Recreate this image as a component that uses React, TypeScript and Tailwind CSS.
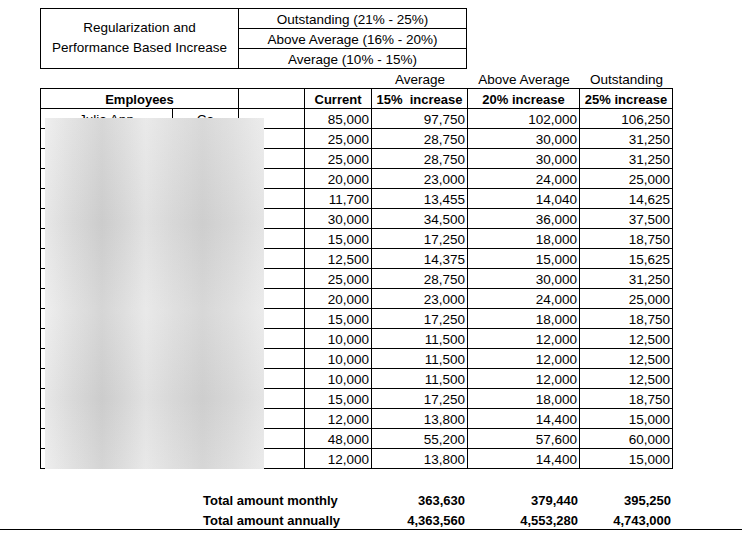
import React from 'react'

const ROWS: [string, string, string, string][] = [
  ['85,000', '97,750', '102,000', '106,250'],
  ['25,000', '28,750', '30,000', '31,250'],
  ['25,000', '28,750', '30,000', '31,250'],
  ['20,000', '23,000', '24,000', '25,000'],
  ['11,700', '13,455', '14,040', '14,625'],
  ['30,000', '34,500', '36,000', '37,500'],
  ['15,000', '17,250', '18,000', '18,750'],
  ['12,500', '14,375', '15,000', '15,625'],
  ['25,000', '28,750', '30,000', '31,250'],
  ['20,000', '23,000', '24,000', '25,000'],
  ['15,000', '17,250', '18,000', '18,750'],
  ['10,000', '11,500', '12,000', '12,500'],
  ['10,000', '11,500', '12,000', '12,500'],
  ['10,000', '11,500', '12,000', '12,500'],
  ['15,000', '17,250', '18,000', '18,750'],
  ['12,000', '13,800', '14,400', '15,000'],
  ['48,000', '55,200', '57,600', '60,000'],
  ['12,000', '13,800', '14,400', '15,000'],
]

const COLS = 'grid grid-cols-[132px_66px_66px_67px_96px_112px_93px]'
const cell = 'h-[20px] border-r border-b border-black flex items-end pb-[1px] leading-[15px] whitespace-nowrap overflow-hidden'
const num = cell + ' justify-end pr-[2px]'
const head = cell + ' justify-center font-bold text-[13px]'
const tot = 'h-[20px] flex items-end pb-[1px] justify-end'

export default function App() {
  return (
    <div
      className="relative w-[742px] h-[534px] bg-white text-black text-[13.5px] pt-[8px]"
      style={{ fontFamily: '"Liberation Sans", Arial, sans-serif' }}
    >
      {/* legend box */}
      <div className="ml-[40px] w-[427px] grid grid-cols-[198px_228px] border-l border-t border-black">
        <div className="row-span-3 border-r border-b border-black flex items-center justify-center text-center leading-[20px] pb-[1px]">
          <div>
            Regularization and
            <br />
            Performance Based Increase
          </div>
        </div>
        <div className={cell + ' justify-center'}>Outstanding (21% - 25%)</div>
        <div className={cell + ' justify-center'}>Above Average (16% - 20%)</div>
        <div className={cell + ' justify-center'}>Average (10% - 15%)</div>
      </div>

      {/* rating labels above table */}
      <div className={COLS + ' ml-[41px] h-[19px] items-end pb-[1px] leading-[15px] whitespace-nowrap'}>
        <div />
        <div />
        <div />
        <div />
        <div className="text-center">Average</div>
        <div className="text-center">Above Average</div>
        <div className="text-center">Outstanding</div>
      </div>

      {/* main table */}
      <div className={COLS + ' ml-[40px] w-[633px] border-l border-t border-black'}>
        <div className={head + ' col-span-2'}>Employees</div>
        <div className={cell} />
        <div className={head}>Current</div>
        <div className={head + ' whitespace-pre'}>15%  increase</div>
        <div className={head}>20% increase</div>
        <div className={head}>25% increase</div>

        {ROWS.map((r, i) => (
          <React.Fragment key={i}>
            <div className={cell + ' justify-center'}>{i === 0 ? 'Julia Ann' : ''}</div>
            <div className={cell + ' justify-center'}>{i === 0 ? 'Ca' : ''}</div>
            <div className={cell} />
            <div className={num}>{r[0]}</div>
            <div className={num}>{r[1]}</div>
            <div className={num}>{r[2]}</div>
            <div className={num}>{r[3]}</div>
          </React.Fragment>
        ))}
      </div>

      {/* totals */}
      <div className="mt-[20px] w-[742px] border-b border-black">
        <div className={COLS + ' ml-[41px] font-bold text-[13px] leading-[15px] whitespace-nowrap'}>
          <div className="h-[20px]" />
          <div className="col-span-3 h-[20px] flex items-end pb-[1px] pl-[30px]">Total amount monthly</div>
          <div className={tot + ' pr-[3px]'}>363,630</div>
          <div className={tot + ' pr-[2px]'}>379,440</div>
          <div className={tot + ' pr-[2px]'}>395,250</div>
          <div className="h-[20px]" />
          <div className="col-span-3 h-[20px] flex items-end pb-[1px] pl-[30px]">Total amount annually</div>
          <div className={tot + ' pr-[3px]'}>4,363,560</div>
          <div className={tot + ' pr-[2px]'}>4,553,280</div>
          <div className={tot + ' pr-[2px]'}>4,743,000</div>
        </div>
      </div>

      {/* redaction blur over employee names */}
      <div className="absolute left-[45px] top-[118px] w-[219px] h-[351px] bg-[linear-gradient(90deg,#ececec_0%,#dedede_12%,#d0d0d0_26%,#dadada_36%,#e6e6e6_46%,#dcdcdc_58%,#d2d2d2_72%,#dcdcdc_86%,#e9e9e9_100%)]">
        <div className="w-full h-full bg-[linear-gradient(180deg,rgba(255,255,255,0.15)_0%,rgba(0,0,0,0.02)_30%,rgba(255,255,255,0.12)_55%,rgba(0,0,0,0.02)_80%,rgba(255,255,255,0.1)_100%)]" />
      </div>
    </div>
  )
}
